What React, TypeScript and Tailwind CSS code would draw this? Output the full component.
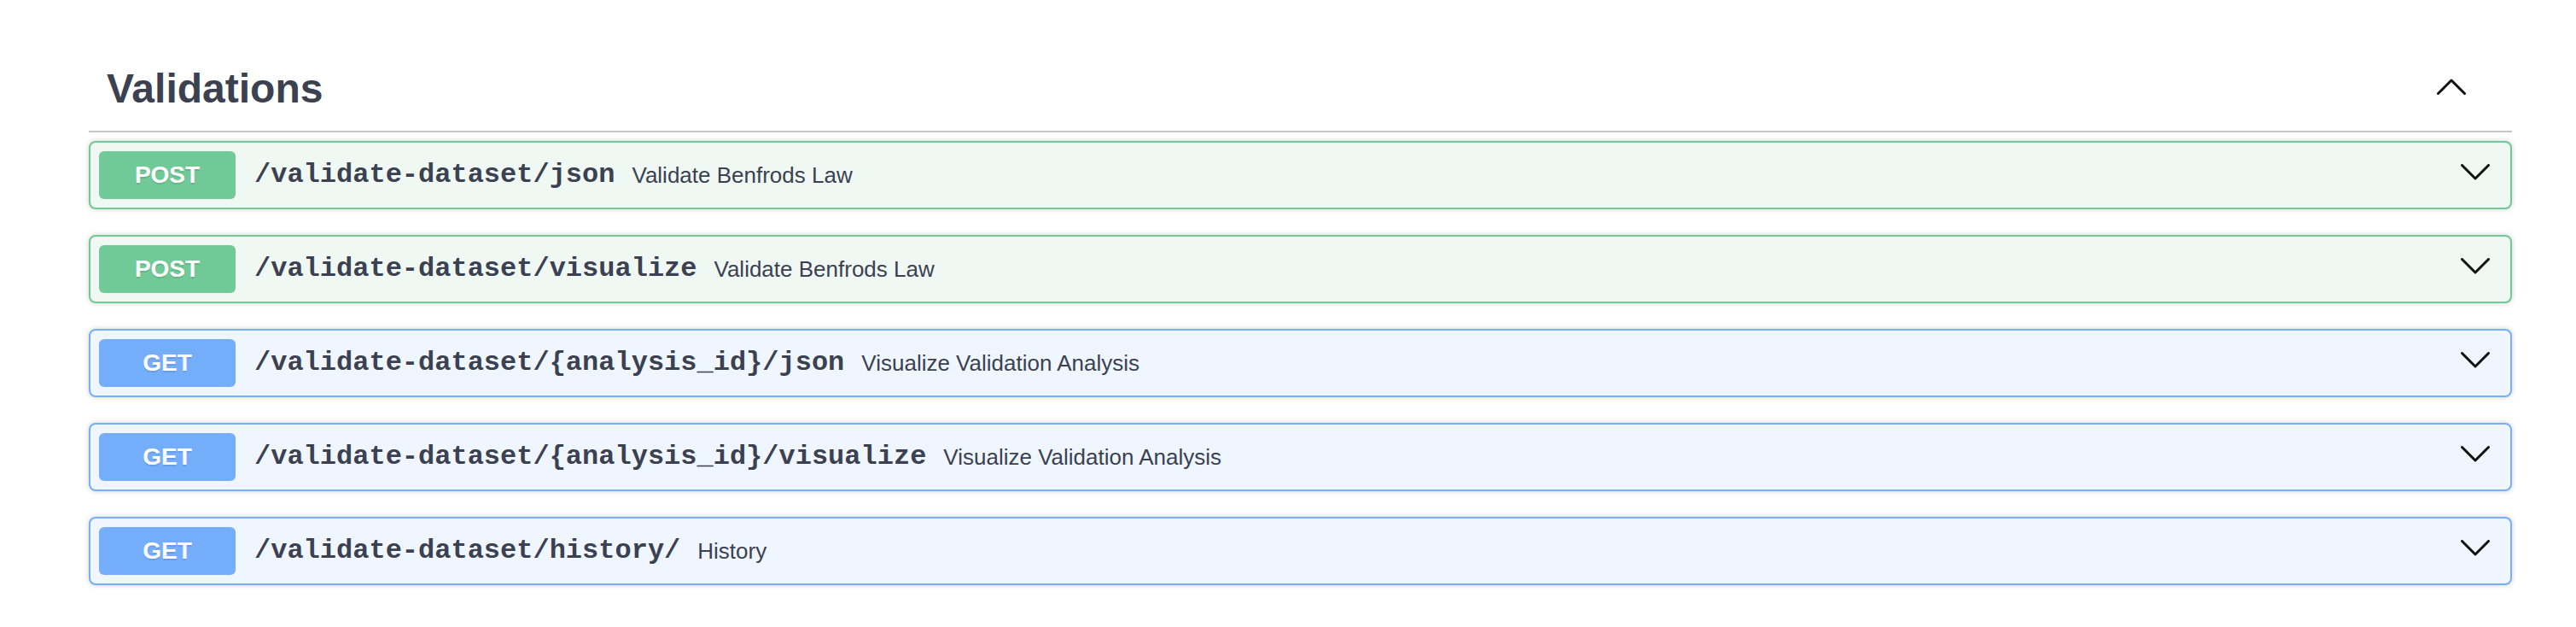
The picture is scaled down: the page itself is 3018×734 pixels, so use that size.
type Op = {
  method: "POST" | "GET";
  path: string;
  summary: string;
};

const ops: Op[] = [
  { method: "POST", path: "/validate-dataset/json", summary: "Validate Benfrods Law" },
  { method: "POST", path: "/validate-dataset/visualize", summary: "Validate Benfrods Law" },
  { method: "GET", path: "/validate-dataset/{analysis_id}/json", summary: "Visualize Validation Analysis" },
  { method: "GET", path: "/validate-dataset/{analysis_id}/visualize", summary: "Visualize Validation Analysis" },
  { method: "GET", path: "/validate-dataset/history/", summary: "History" },
];

function Chevron({ up = false, className = "" }: { up?: boolean; className?: string }) {
  return (
    <svg width="34" height="19" viewBox="0 0 34 19" className={className} fill="none" stroke="#111" strokeWidth="3" strokeLinecap="round" strokeLinejoin="round">
      {up ? <polyline points="1.5,17.5 17,2 32.5,17.5" /> : <polyline points="1.5,1.5 17,17 32.5,1.5" />}
    </svg>
  );
}

function OpBlock({ op }: { op: Op }) {
  const post = op.method === "POST";
  return (
    <div
      className={`flex items-center h-[80px] px-[10px] border-2 rounded-[8px] shadow-[0_0_6px_rgba(0,0,0,0.19)] ${
        post ? "border-[#70c996] bg-[#eff8f3]" : "border-[#76b0fb] bg-[#eff6ff]"
      }`}
    >
      <span
        className={`flex items-center justify-center w-[160px] h-[56px] rounded-[6px] text-[28px] font-bold text-white [text-shadow:0_2px_0_rgba(0,0,0,0.1)] ${
          post ? "bg-[#70c996]" : "bg-[#74aefb]"
        }`}
      >
        {op.method}
      </span>
      <span className="pl-[22px] pr-[20px] font-['Liberation_Mono',monospace] font-bold text-[32px] text-[#3b4151]">
        {op.path}
      </span>
      <span className="text-[26px] text-[#3b4151]">{op.summary}</span>
      <Chevron className="ml-auto mr-[14px] mb-[8px]" />
    </div>
  );
}

export default function App() {
  return (
    <div className="min-h-screen bg-white pl-[104px] pt-[57px] font-['Liberation_Sans',Arial,sans-serif]">
      <div className="w-[2839px]">
        <div className="flex items-center h-[98px] pl-[21px] border-b-2 border-[#c4c6cb] mb-[10px]">
          <h3 className="flex-1 mb-[4px] text-[48px] leading-[55px] font-bold text-[#3b4151]">Validations</h3>
          <Chevron up className="mr-[54px] mb-[8px]" />
        </div>
        <div className="flex flex-col gap-[30px]">
          {ops.map((op) => (
            <OpBlock key={op.path} op={op} />
          ))}
        </div>
      </div>
    </div>
  );
}
